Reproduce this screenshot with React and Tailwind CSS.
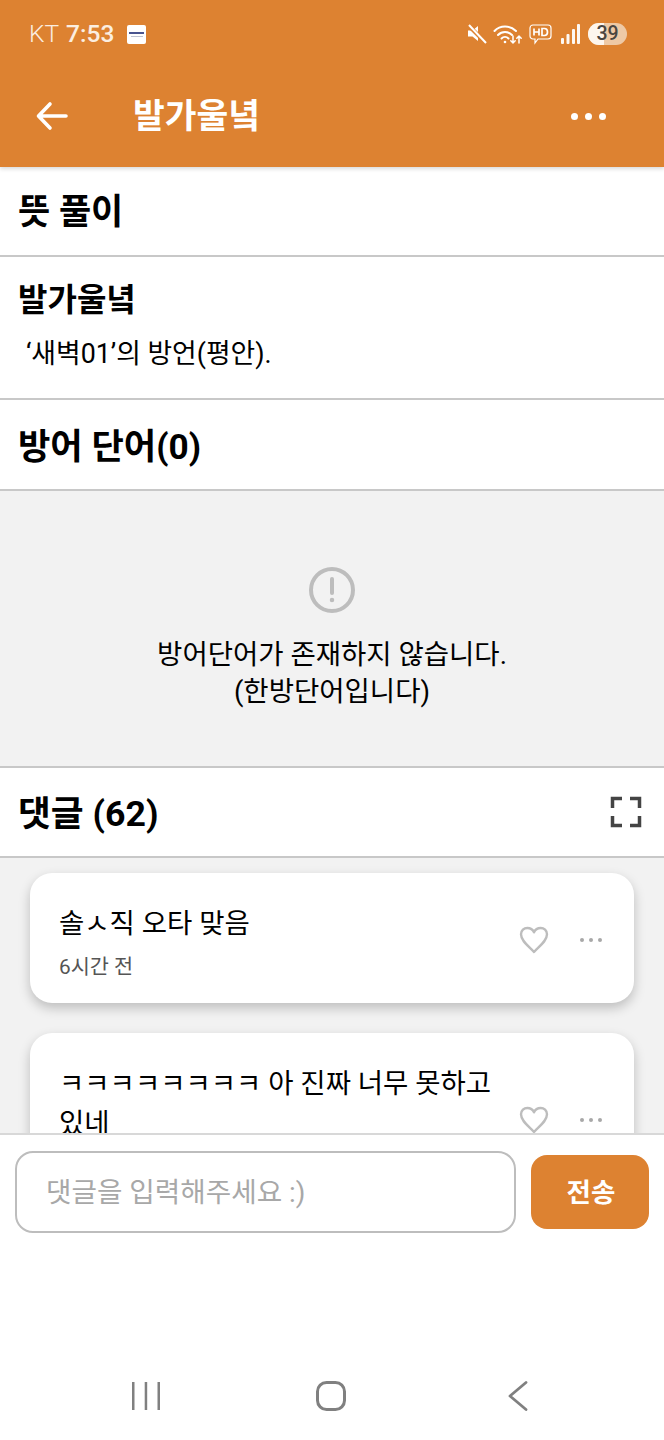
const KR = { fontFamily: '"Roboto","Noto Sans CJK KR",sans-serif' };

function Heart() {
  return (
    <svg width="30" height="30" viewBox="0 0 30 30" fill="none" stroke="#bdbdbd" strokeWidth="2.4" strokeLinejoin="round">
      <path d="M15 27 C10 21.5 2 16 2 9.300 C2 5.500 5 3 8.300 3 C11 3 13.800 4.500 15 7.300 C16.200 4.500 19 3 21.700 3 C25 3 28 5.500 28 9.300 C28 16 20 21.500 15 27 Z" />
    </svg>
  );
}

function SmallDots() {
  return (
    <div className="flex gap-[5px]">
      <span className="w-1 h-1 rounded-full bg-[#a8a8a8]" />
      <span className="w-1 h-1 rounded-full bg-[#a8a8a8]" />
      <span className="w-1 h-1 rounded-full bg-[#a8a8a8]" />
    </div>
  );
}

function StatusBar() {
  return (
    <div className="h-[68px] pl-[29px] pr-[37px] flex items-center justify-between">
      <div className="flex items-center text-[24.500px] leading-none text-[#fbeee0]">
        <span className="font-light">KT</span>
        <span className="ml-[7px] font-medium">7:53</span>
        <div className="ml-[13px] w-[19px] h-[19px] rounded-[2px] bg-white flex flex-col items-center justify-center gap-[2px]">
          <span className="w-[15px] h-[2px] bg-[#4a5590]" />
          <span className="w-[12px] h-[1px] bg-[#c0c4d2]" />
        </div>
      </div>
      <div className="flex items-center">
        <svg width="22" height="22" viewBox="0 0 22 22" fill="#fff">
          <path d="M2 7.500h4.500L12 3v15l-5.500-4.500H2z" />
          <path d="M2 2l18 18" stroke="#dd8231" strokeWidth="4" />
          <path d="M3 2l17 18" stroke="#fff" strokeWidth="2" />
        </svg>
        <svg className="ml-[5px]" width="30" height="24" viewBox="0 0 30 24" fill="none" stroke="#fff" strokeWidth="2" strokeLinecap="round">
          <path d="M1.500 9C7 3 17 3 23 9" />
          <path d="M5 13c4-4 10-4 14 0" />
          <path d="M8.500 16.500c2-2 5-2 7 0" />
          <circle cx="12" cy="20" r="1.300" fill="#fff" stroke="none" />
          <path d="M20 14v7M17.800 18.800L20 21l2.200-2.200M26 21v-7M23.800 16.200L26 14l2.200 2.200" strokeWidth="1.500" />
        </svg>
        <svg className="ml-[6px]" width="23" height="22" viewBox="0 0 23 22" fill="none" stroke="#fff" strokeWidth="1.200">
          <path d="M4 2h15a3 3 0 0 1 3 3v8a3 3 0 0 1-3 3H9l-3 4v-4H4a3 3 0 0 1-3-3V5a3 3 0 0 1 3-3z" />
          <path d="M5 5.500v7M10 5.500v7M5 9h5M13 5.500v7h2.500c2 0 3-1.500 3-3.500s-1-3.500-3-3.500z" strokeWidth="1.700" />
        </svg>
        <svg className="ml-[8px]" width="20" height="22" viewBox="0 0 20 22" fill="#fff" opacity="0.95">
          <rect x="1" y="15" width="3" height="6" rx="1" />
          <rect x="6.500" y="11" width="3" height="10" rx="1" />
          <rect x="12" y="6" width="3" height="15" rx="1" />
          <rect x="17" y="1" width="3" height="20" rx="1" />
        </svg>
        <div className="ml-[8px] w-[39px] h-[22px] rounded-full overflow-hidden relative bg-[#eec9a5] flex items-center justify-center">
          <span className="absolute left-0 top-0 bottom-0 w-[16px] bg-[#fdf6ee]" />
          <span className="relative text-[19.500px] leading-none font-medium text-[#4a4540]">39</span>
        </div>
      </div>
    </div>
  );
}

function SectionTitle({ children, h, size }) {
  return <div className={`flex items-center pl-[18px] pr-[19px] pt-[5px] border-b-2 border-[#c8c8c8] font-bold text-black bg-white ${size} ${h}`}>{children}</div>;
}

function Comment({ text, time, iconsTop }) {
  return (
    <div className="w-[604px] h-[130px] shrink-0 rounded-[22px] bg-white shadow-[0_5px_12px_rgba(0,0,0,0.22)] pl-[29px] pr-[30px] relative">
      <div className="w-[450px] pt-[31px] text-[27.500px] leading-[40px] text-black">{text}</div>
      {time && <div className="mt-[9px] text-[20.800px] leading-[28px] text-[#555]">{time}</div>}
      <div className={`absolute right-[32px] flex items-center gap-[31px] ${iconsTop}`}>
        <Heart />
        <SmallDots />
      </div>
    </div>
  );
}

export default function App() {
  return (
    <div style={KR} className="w-[664px] h-[1440px] bg-white flex flex-col overflow-hidden">
      <div className="h-[167px] shrink-0 bg-[#dd8231] shadow-[0_2px_4px_rgba(0,0,0,0.15)] relative z-10">
        <StatusBar />
        <div className="h-[96px] flex items-center pl-[36px] pr-[58px] text-white">
          <svg width="34" height="34" viewBox="0 0 34 34" fill="none" stroke="#fff" strokeWidth="3.600" strokeLinecap="round" strokeLinejoin="round">
            <path d="M30 17H3M14 5L2.500 17 14 29" />
          </svg>
          <div className="ml-[63px] text-[34.500px] font-bold leading-none flex-1">발가울녘</div>
          <div className="flex gap-[7px]">
            <span className="w-[7px] h-[7px] rounded-full bg-white" />
            <span className="w-[7px] h-[7px] rounded-full bg-white" />
            <span className="w-[7px] h-[7px] rounded-full bg-white" />
          </div>
        </div>
      </div>

      <SectionTitle size="text-[35px]" h="h-[90px] shrink-0">뜻 풀이</SectionTitle>

      <div className="h-[143px] shrink-0 border-b-2 border-[#c8c8c8] pl-[18px] pr-[19px] pt-[22px]">
        <div className="text-[32px] leading-[42px] font-bold text-black">발가울녘</div>
        <div className="mt-[13px] pl-[8px] text-[26.800px] leading-[40px] text-black">‘새벽01’의 방언(평안).</div>
      </div>

      <SectionTitle size="text-[35.200px]" h="h-[91px] shrink-0">방어 단어(0)</SectionTitle>

      <div className="h-[277px] shrink-0 bg-[#f2f2f2] border-b-2 border-[#c8c8c8] flex flex-col items-center pt-[76px]">
        <svg width="46" height="46" viewBox="0 0 46 46" fill="none" stroke="#bdbdbd" strokeWidth="4" strokeLinecap="round">
          <circle cx="23" cy="23" r="21" />
          <path d="M23 12v14" />
          <circle cx="23" cy="33" r="1.500" fill="#bdbdbd" strokeWidth="1.500" />
        </svg>
        <div className="mt-[23px] text-[27.500px] leading-[37px] text-black text-center">방어단어가 존재하지 않습니다.<br />(한방단어입니다)</div>
      </div>

      <SectionTitle size="text-[35.700px]" h="h-[90px] shrink-0 justify-between">
        <span>댓글 (62)</span>
        <svg className="mr-[3px] -mt-[5px]" width="32" height="32" viewBox="0 0 32 32" fill="none" stroke="#444" strokeWidth="3.500" strokeLinejoin="miter">
          <path d="M12 2.500H2.500V12M20 2.500h9.500V12M2.500 20v9.500H12M29.500 20v9.500H20" />
        </svg>
      </SectionTitle>

      <div className="h-[275px] shrink-0 bg-[#f2f2f2] overflow-hidden flex flex-col items-center gap-[30px] pt-[15px]">
        <Comment text="솔ㅅ직 오타 맞음" time="6시간 전" iconsTop="top-[52px]" />
        <Comment text="ㅋㅋㅋㅋㅋㅋㅋㅋ 아 진짜 너무 못하고 있네" iconsTop="top-[72px]" />
      </div>

      <div className="border-t-2 border-[#d8d8d8] px-[15px] pt-[16px] flex items-center gap-[15px]">
        <div className="w-[501px] h-[82px] rounded-[18px] border-2 border-[#bdbdbd] flex items-center pl-[29px] pt-[2px] text-[27.700px] text-[#a8a8a8]">댓글을 입력해주세요 :)</div>
        <div className="w-[118px] h-[74px] rounded-[16px] bg-[#dd8231] flex items-center justify-center pt-[2px] pl-[2px] text-[26.500px] font-bold text-white">전송</div>
      </div>

      <div className="mt-auto h-[88px] flex items-center pl-[132px] pr-[136px] justify-between">
        <svg width="28" height="28" viewBox="0 0 28 28" fill="#808080">
          <rect x="0" y="0" width="2.500" height="28" />
          <rect x="12.700" y="0" width="2.500" height="28" />
          <rect x="25.500" y="0" width="2.500" height="28" />
        </svg>
        <svg className="-ml-[6px]" width="30" height="30" viewBox="0 0 30 30" fill="none" stroke="#808080" strokeWidth="3">
          <rect x="1.500" y="1.500" width="27" height="27" rx="9" />
        </svg>
        <svg width="20" height="30" viewBox="0 0 20 30" fill="none" stroke="#808080" strokeWidth="2.800" strokeLinecap="round" strokeLinejoin="round">
          <path d="M18 1.500L2 15l16 13.500" />
        </svg>
      </div>
    </div>
  );
}
